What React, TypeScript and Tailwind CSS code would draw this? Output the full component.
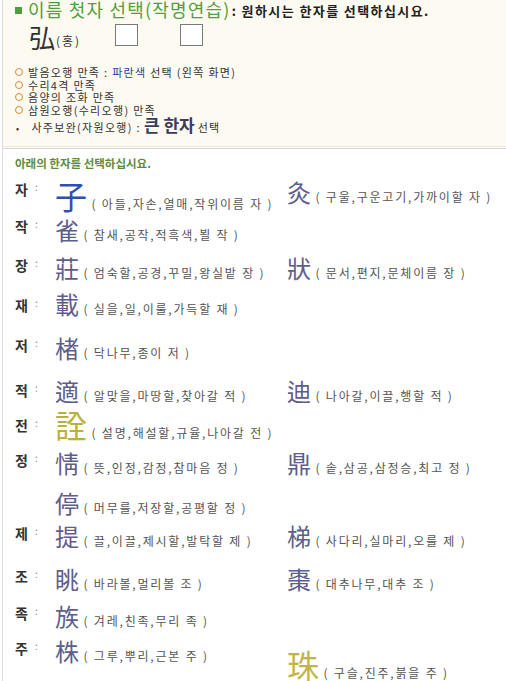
import React from 'react';

type Cell = { ch: string; d: string; big?: boolean; color?: string; mt?: string };
type Row = { label?: string; h: string; lm?: string; cells: (Cell | null)[] };

const rows: Row[] = [
  {
    label: '자',
    h: 'h-[39px]',
    lm: 'mt-[3px]',
    cells: [
      { ch: '子', d: '아들,자손,열매,작위이름 자', big: true, color: 'text-[#2f50b0]' },
      { ch: '灸', d: '구울,구운고기,가까이할 자', mt: 'mt-[1px]' },
    ],
  },
  { label: '작', h: 'h-[38px]', lm: 'mt-[1px]', cells: [{ ch: '雀', d: '참새,공작,적흑색,뵐 작' }, null] },
  {
    label: '장',
    h: 'h-[36px]',
    lm: 'mt-[2px]',
    cells: [
      { ch: '莊', d: '엄숙할,공경,꾸밀,왕실밭 장' },
      { ch: '狀', d: '문서,편지,문체이름 장' },
    ],
  },
  { label: '재', h: 'h-[44px]', lm: 'mt-[6px]', cells: [{ ch: '載', d: '실을,일,이룰,가득할 재' }, null] },
  { label: '저', h: 'h-[43px]', lm: 'mt-[2px]', cells: [{ ch: '楮', d: '닥나무,종이 저' }, null] },
  {
    label: '적',
    h: 'h-[29px]',
    lm: 'mt-[4px]',
    cells: [
      { ch: '適', d: '알맞을,마땅할,찾아갈 적' },
      { ch: '迪', d: '나아갈,이끌,행할 적' },
    ],
  },
  {
    label: '전',
    h: 'h-[43px]',
    lm: 'mt-[10px]',
    cells: [{ ch: '詮', d: '설명,해설할,규율,나아갈 전', big: true, color: 'text-[#b9b23a]' }, null],
  },
  {
    label: '정',
    h: 'h-[40px]',
    lm: 'mt-[2px]',
    cells: [
      { ch: '情', d: '뜻,인정,감정,참마음 정' },
      { ch: '鼎', d: '솥,삼공,삼정승,최고 정' },
    ],
  },
  { h: 'h-[33px]', cells: [{ ch: '停', d: '머무를,저장할,공평할 정' }, null] },
  {
    label: '제',
    h: 'h-[43px]',
    lm: 'mt-[2px]',
    cells: [
      { ch: '提', d: '끌,이끌,제시할,발탁할 제' },
      { ch: '梯', d: '사다리,실마리,오를 제' },
    ],
  },
  {
    label: '조',
    h: 'h-[37px]',
    lm: 'mt-[2px]',
    cells: [
      { ch: '眺', d: '바라볼,멀리볼 조' },
      { ch: '棗', d: '대추나무,대추 조' },
    ],
  },
  { label: '족', h: 'h-[35px]', lm: 'mt-[2px]', cells: [{ ch: '族', d: '겨레,친족,무리 족' }, null] },
  {
    label: '주',
    h: 'h-[40px]',
    lm: 'mt-[2px]',
    cells: [
      { ch: '株', d: '그루,뿌리,근본 주' },
      { ch: '珠', d: '구슬,진주,붉을 주', big: true, color: 'text-[#c2b446]', mt: 'mt-[9px]' },
    ],
  },
];

function HanjaCell({ cell }: { cell: Cell }) {
  return (
    <div className={`whitespace-nowrap text-[12px] leading-none cursor-pointer ${cell.mt ?? ''}`}>
      <span
        className={`leading-none ${cell.big ? 'text-[32px]' : 'text-[24px]'} ${cell.color ?? 'text-[#5e5e8c]'}`}
      >
        {cell.ch}
      </span>
      <span className="text-[#555] tracking-[1.8px]"> ( {cell.d} )</span>
    </div>
  );
}

function Bullet({ children }: { children: React.ReactNode }) {
  return (
    <div className="flex items-center h-[12.5px] whitespace-nowrap">
      <span className="w-[8px] h-[8px] rounded-full border-[1.5px] border-[#d98a3a] mr-[5px] shrink-0" />
      <span>{children}</span>
    </div>
  );
}

export default function App() {
  return (
    <div
      className="w-[506px] h-[681px] overflow-hidden bg-white pl-[2px]"
      style={{ fontFamily: '"Noto Sans CJK KR", "Noto Sans", sans-serif' }}
    >
      <div className="h-full border-l border-[#dcdcdc] text-[#333]">
        {/* 상단 안내 */}
        <div className="bg-[#fdfaf1] h-[147px] border-b border-[#ebe6d8] pl-[12px] pt-[1px]">
          <div className="flex items-center h-[16px] leading-none whitespace-nowrap">
            <span className="inline-block w-[7px] h-[7px] bg-[#4f9f3e] mr-[6px] mt-[3px]" />
            <span className="text-[18px] tracking-[1.2px] text-[#4f9f3e]">이름 첫자 선택(작명연습)</span>
            <span className="text-[13px] font-bold tracking-[1.4px] text-[#222] ml-[1px] mt-[2px]">
              : 원하시는 한자를 선택하십시요.
            </span>
          </div>
          <div className="flex items-start mt-[7px] ml-[14px] h-[24px]">
            <span className="text-[26px] leading-none text-[#333]">弘</span>
            <span className="text-[12px] leading-none mt-[11px] tracking-[2px] ml-[1px]">(홍)</span>
            <span className="w-[23px] h-[22px] border border-[#7a7a7a] bg-white ml-[34px]" />
            <span className="w-[23px] h-[22px] border border-[#7a7a7a] bg-white ml-[42px]" />
          </div>
          <div className="mt-[18px] text-[11px] leading-[12.5px] tracking-[1.3px] text-[#333]">
            <Bullet>
              발음오행 만족 : <span className="text-[#2b3a9c]">파란색</span> 선택 (왼쪽 화면)
            </Bullet>
            <Bullet>수리4격 만족</Bullet>
            <Bullet>음양의 조화 만족</Bullet>
            <Bullet>삼원오행(수리오행) 만족</Bullet>
            <div className="flex items-baseline mt-[3px] whitespace-nowrap">
              <span className="text-[9px] mr-[11px] ml-[1px]">•</span>
              <span>사주보완(자원오행) : </span>
              <span className="text-[17px] font-bold tracking-normal text-[#3b3b5c] mx-[3px]">큰 한자</span>
              <span>선택</span>
            </div>
          </div>
        </div>

        {/* 한자 선택 */}
        <div className="border-t border-[#d4d4d4] mt-[1px] pl-[12px]">
          <div className="mt-[9px] h-[21px] text-[11.5px] font-bold leading-none text-[#5f8c3c]">
            아래의 한자를 선택하십시요.
          </div>
          {rows.map((r, i) => (
            <div key={i} className={`flex items-start ${r.h}`}>
              <div className={`w-[40px] shrink-0 flex items-start ${r.lm ?? ''}`}>
                {r.label && (
                  <>
                    <span className="text-[14px] font-bold leading-none text-[#333]">{r.label}</span>
                    <span className="text-[10px] leading-none text-[#888] ml-[7px]">:</span>
                  </>
                )}
              </div>
              <div className="w-[232px] shrink-0">{r.cells[0] && <HanjaCell cell={r.cells[0]} />}</div>
              <div>{r.cells[1] && <HanjaCell cell={r.cells[1]} />}</div>
            </div>
          ))}
        </div>
      </div>
    </div>
  );
}
